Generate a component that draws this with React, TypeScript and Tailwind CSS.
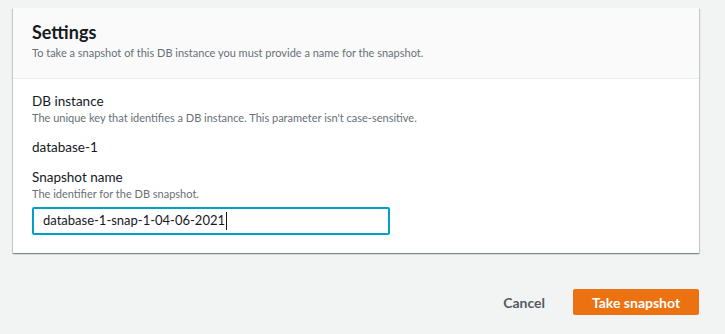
const font = { fontFamily: 'Lato, "Noto Sans", Arial, sans-serif' };

function App() {
  return (
    <div className="min-h-screen bg-[#f2f3f3] pt-[8px] pl-[13px]" style={font}>
      {/* Settings card */}
      <div className="w-[686px] bg-white shadow-[0_1px_1px_0_rgba(0,28,36,0.3),1px_1px_1px_0_rgba(0,28,36,0.15),-1px_1px_1px_0_rgba(0,28,36,0.15)]">
        <div className="bg-[#fafafa] border-b border-[#eaeded] px-[19px] pt-[13px] pb-[17px]">
          <h2 className="text-[18px] leading-[22px] font-bold text-[#16191f]">Settings</h2>
          <p className="text-[11px] leading-[16px] text-[#687078] mt-[2px]">
            To take a snapshot of this DB instance you must provide a name for the snapshot.
          </p>
        </div>

        <div className="px-[19px] pt-[13px] pb-[18px]">
          <div className="text-[13.5px] leading-[18px] text-[#16191f]">DB instance</div>
          <div className="text-[11px] leading-[16px] text-[#687078]">
            The unique key that identifies a DB instance. This parameter isn't case-sensitive.
          </div>
          <div className="text-[13.5px] leading-[20px] text-[#16191f] mt-[11px]">database-1</div>

          <div className="text-[13.5px] leading-[18px] text-[#16191f] mt-[11px]">Snapshot name</div>
          <div className="text-[11px] leading-[16px] text-[#687078]">The identifier for the DB snapshot.</div>
          <div className="mt-[5px] w-[358px] h-[28px] border-2 border-[#00a1c9] rounded-[2px] flex items-center pl-[9px] text-[13px] text-[#16191f]">
            database-1-snap-1-04-06-2021
            <span className="inline-block w-px h-[18px] bg-[#16191f] ml-px" />
          </div>
        </div>
      </div>

      {/* Actions */}
      <div className="w-[686px] flex items-center justify-end gap-[28px] mt-[36px]">
        <button type="button" className="text-[14px] font-bold text-[#545b64]">Cancel</button>
        <button
          type="button"
          className="w-[126px] h-[26px] bg-[#ec7211] rounded-[2px] text-white text-[14px] font-bold"
        >
          Take snapshot
        </button>
      </div>
    </div>
  );
}

export default App;
